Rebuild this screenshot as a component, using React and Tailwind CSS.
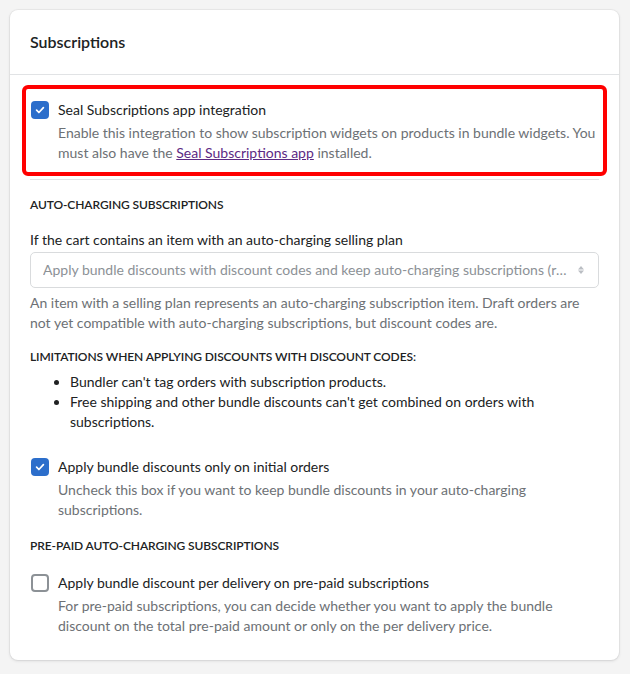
import React from 'react';

const Check = ({ checked }) => (
  <span
    className={`mt-[1px] flex h-[18px] w-[18px] shrink-0 items-center justify-center rounded-[4px] ${
      checked ? 'bg-[#2c6ecb]' : 'border-2 border-[#8c9196] bg-white'
    }`}
  >
    {checked && (
      <svg width="12" height="12" viewBox="0 0 12 12" fill="none">
        <path d="M2.6 6.2l2.3 2.3 4.5-4.8" stroke="white" strokeWidth="1.7" strokeLinecap="round" strokeLinejoin="round" />
      </svg>
    )}
  </span>
);

const CheckRow = ({ checked, label, children }) => (
  <div className="flex gap-[9px] pl-px">
    <Check checked={checked} />
    <div>
      <div className="text-[#202223]">{label}</div>
      <div className="mt-[3px] text-[#6d7175]">{children}</div>
    </div>
  </div>
);

const Heading = ({ children }) => (
  <h3 className="text-[12px] font-semibold uppercase tracking-[-0.1px] text-[#202223]">{children}</h3>
);

export default function App() {
  return (
    <div
      className="min-h-screen bg-[#f4f4f4] px-[10px] pt-[10px] pb-3 text-[14px] leading-[20px]"
      style={{ fontFamily: 'Lato, "Open Sans", sans-serif' }}
    >
      <div className="w-[609px] rounded-lg bg-white shadow-[0_0_0_1px_rgba(63,63,68,0.05),0_1px_3px_rgba(63,63,68,0.15)]">
        <div className="border-b border-[#e1e3e5] px-5 py-5">
          <h2 className="text-[16px] font-semibold leading-6 text-[#202223]">Subscriptions</h2>
        </div>

        <div className="px-5 pt-[25px] pb-[24px]">
          <div className="relative">
            <div className="pointer-events-none absolute -top-[15px] -bottom-[13px] -left-2 -right-2 rounded-md border-4 border-[#ff0000]" />
            <CheckRow checked label="Seal Subscriptions app integration">
              Enable this integration to show subscription widgets on products in bundle widgets. You must also have
              the{' '}
              <a href="#" className="text-[#5c2a84] underline">
                Seal Subscriptions app
              </a>{' '}
              installed.
            </CheckRow>
          </div>

          <div className="mt-[16px] border-t border-[#e1e3e5]" />

          <div className="mt-[15px]">
            <Heading>Auto-charging subscriptions</Heading>
          </div>

          <div className="mt-[15px]">
            <div className="text-[#202223]">If the cart contains an item with an auto-charging selling plan</div>
            <div className="mt-[2px] flex h-[36px] items-center justify-between rounded-[5px] border border-[#d9dbdd] pr-[12px] pl-3 text-[#8c9196]">
              <span className="truncate">
                Apply bundle discounts with discount codes and keep auto-charging subscriptions (recommended)
              </span>
              <svg width="10" height="14" viewBox="0 0 10 14" className="ml-2 shrink-0">
                <path d="M5 3L8 6.5H2z M5 11L2 7.5h6z" fill="#babec3" />
              </svg>
            </div>
            <p className="mt-[5px] text-[#6d7175]">
              An item with a selling plan represents an auto-charging subscription item. Draft orders are not yet
              compatible with auto-charging subscriptions, but discount codes are.
            </p>
          </div>

          <div className="mt-[14px]">
            <Heading>Limitations when applying discounts with discount codes:</Heading>
            <ul className="mt-[5px] list-disc pl-10 text-[#202223]">
              <li>Bundler can't tag orders with subscription products.</li>
              <li>Free shipping and other bundle discounts can't get combined on orders with subscriptions.</li>
            </ul>
          </div>

          <div className="mt-[25px]">
            <CheckRow checked label="Apply bundle discounts only on initial orders">
              Uncheck this box if you want to keep bundle discounts in your auto-charging subscriptions.
            </CheckRow>
          </div>

          <div className="mt-[16px]">
            <Heading>Pre-paid auto-charging subscriptions</Heading>
          </div>

          <div className="mt-[17px]">
            <CheckRow label="Apply bundle discount per delivery on pre-paid subscriptions">
              For pre-paid subscriptions, you can decide whether you want to apply the bundle discount on the total
              pre-paid amount or only on the per delivery price.
            </CheckRow>
          </div>
        </div>
      </div>
    </div>
  );
}
